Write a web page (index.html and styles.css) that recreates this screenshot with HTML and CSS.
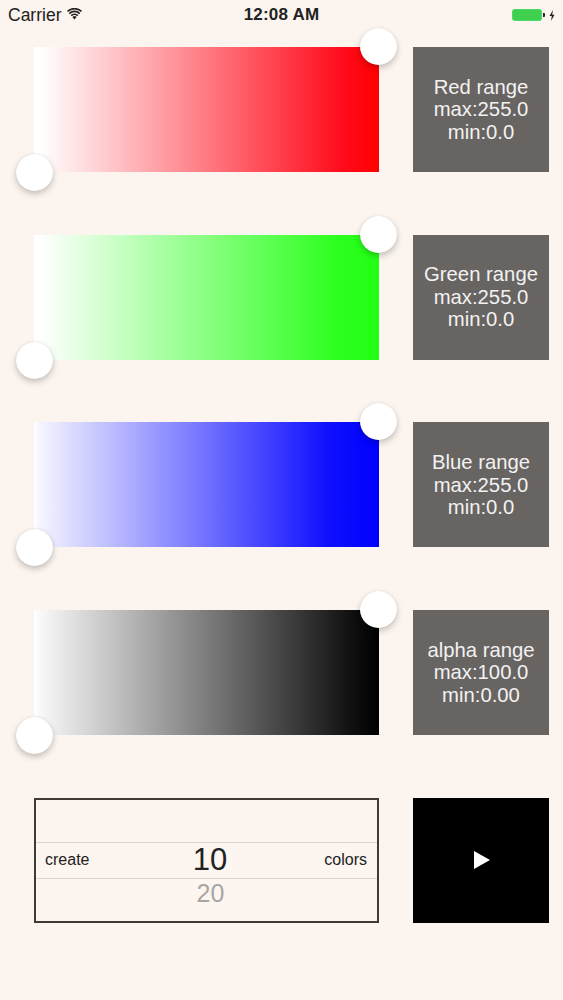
FILE: index.html
```html
<!DOCTYPE html>
<html>
<head>
<meta charset="utf-8">
<link rel="stylesheet" href="styles.css">
</head>
<body>
<div class="status">
  <div class="status-left">
    <span class="carrier">Carrier</span>
    <svg class="wifi" width="15" height="12" viewBox="0 0 15 12">
      <path d="M7.5 11.5 L9.6 8.9 A3.4 3.4 0 0 0 5.4 8.9 Z" fill="#222"/>
      <path d="M3.6 7 A5.6 5.6 0 0 1 11.4 7 L10.3 8.3 A4 4 0 0 0 4.7 8.3 Z" fill="#222"/>
      <path d="M1.7 4.9 A8.4 8.4 0 0 1 13.3 4.9 L12.2 6.2 A6.8 6.8 0 0 0 2.8 6.2 Z" fill="#222"/>
      <path d="M0 2.8 A11 11 0 0 1 15 2.8 L14 4.1 A9.5 9.5 0 0 0 1 4.1 Z" fill="#222"/>
    </svg>
  </div>
  <div class="time">12:08 AM</div>
  <div class="status-right">
    <div class="battery"><div class="battery-fill"></div></div>
    <div class="battery-nub"></div>
    <svg class="bolt" width="6" height="11" viewBox="0 0 6 11">
      <path d="M4 0 L0.5 6 L2.8 6 L2 11 L5.5 4.8 L3.2 4.8 Z" fill="#222"/>
    </svg>
  </div>
</div>

<main class="content">
  <section class="row">
    <div class="bar bar-red">
      <span class="knob knob-max"></span>
      <span class="knob knob-min"></span>
    </div>
    <div class="info">Red range<br>max:255.0<br>min:0.0</div>
  </section>

  <section class="row">
    <div class="bar bar-green">
      <span class="knob knob-max"></span>
      <span class="knob knob-min"></span>
    </div>
    <div class="info">Green range<br>max:255.0<br>min:0.0</div>
  </section>

  <section class="row">
    <div class="bar bar-blue">
      <span class="knob knob-max"></span>
      <span class="knob knob-min"></span>
    </div>
    <div class="info">Blue range<br>max:255.0<br>min:0.0</div>
  </section>

  <section class="row">
    <div class="bar bar-alpha">
      <span class="knob knob-max"></span>
      <span class="knob knob-min"></span>
    </div>
    <div class="info">alpha range<br>max:100.0<br>min:0.00</div>
  </section>

  <section class="row">
    <div class="picker">
      <div class="picker-blank"></div>
      <div class="picker-selected">
        <span class="picker-label">create</span>
        <span class="picker-value">10</span>
        <span class="picker-label">colors</span>
      </div>
      <div class="picker-next">20</div>
    </div>
    <div class="play">
      <svg width="16" height="18" viewBox="0 0 16 18"><path d="M0 0 L16 9 L0 18 Z" fill="#fff"/></svg>
    </div>
  </section>
</main>
</body>
</html>
```

FILE: styles.css
```css
* { box-sizing: border-box; }

html, body {
  margin: 0;
  padding: 0;
}

body {
  background: #fcf4ee;
  font-family: "Liberation Sans", Arial, sans-serif;
  color: #222;
  width: 563px;
  height: 1000px;
  overflow: hidden;
}

.status {
  height: 30px;
  display: flex;
  align-items: center;
  justify-content: space-between;
  padding: 0 8px 0 8px;
  position: relative;
  font-size: 17.5px;
}

.status-left {
  display: flex;
  align-items: center;
  gap: 6px;
  width: 120px;
}

.wifi { margin-top: -2px; }

.time {
  font-weight: bold;
  font-size: 17px;
  letter-spacing: 0.2px;
}

.status-right {
  width: 120px;
  display: flex;
  align-items: center;
  justify-content: flex-end;
}

.battery {
  width: 30px;
  height: 12px;
  border-radius: 3px;
  background: #4cd964;
  padding: 1px;
}

.battery-fill {
  width: 100%;
  height: 100%;
  border-radius: 2px;
  background: #3fd04f;
}

.battery-nub {
  width: 2px;
  height: 4px;
  background: #222;
  border-radius: 0 1px 1px 0;
  margin-left: 1px;
  margin-right: 4px;
}

.content {
  padding: 17px 14px 0 34px;
  display: flex;
  flex-direction: column;
  gap: 62.7px;
}

.row {
  display: flex;
  gap: 34px;
  height: 125px;
}

.bar {
  width: 345px;
  height: 125px;
  position: relative;
}

.bar-red { background: linear-gradient(to right, #fff 0%, #fff 2%, #ff0a1a 90%, #ff0000 100%); }
.bar-green { background: linear-gradient(to right, #fff 0%, #fff 2%, #2cff1e 88%, #22ff14 100%); }
.bar-blue { background: linear-gradient(to right, #fff 0%, #f4f4ff 2%, #1010ff 85%, #0000ff 100%); }
.bar-alpha { background: linear-gradient(to right, #fff 0%, #f8f8f8 2%, #101010 92%, #000 100%); }

.knob {
  position: absolute;
  width: 37px;
  height: 37px;
  border-radius: 50%;
  background: #fff;
  box-shadow: 0 3px 6px rgba(0, 0, 0, 0.22), 0 0 1px rgba(0, 0, 0, 0.15);
}

.knob-max {
  top: -19px;
  right: -18px;
}

.knob-min {
  bottom: -19px;
  left: -18px;
}

.info {
  width: 136px;
  height: 125px;
  background: #686462;
  color: #f2f2f2;
  font-size: 20.3px;
  line-height: 22.5px;
  text-align: center;
  display: flex;
  align-items: center;
  justify-content: center;
}

.picker {
  width: 345px;
  height: 125px;
  border: 2px solid #3e3a38;
  background: #fdf5f0;
  display: flex;
  flex-direction: column;
}

.picker-blank { height: 42px; }

.picker-selected {
  height: 37px;
  border-top: 1.5px solid #d8d4d2;
  border-bottom: 1.5px solid #d8d4d2;
  display: flex;
  align-items: center;
  justify-content: space-between;
  padding: 0 10px 0 9px;
}

.picker-label {
  font-size: 16px;
  color: #222;
  width: 80px;
}

.picker-label:last-child { text-align: right; }

.picker-value {
  font-size: 31px;
  color: #222;
  margin-left: 8px;
}

.picker-next {
  text-align: center;
  font-size: 25px;
  color: #a8a6a5;
  line-height: 28px;
  padding-left: 8px;
}

.play {
  width: 136px;
  height: 125px;
  background: #000;
  display: flex;
  align-items: center;
  justify-content: center;
  padding-left: 2px;
}
```
